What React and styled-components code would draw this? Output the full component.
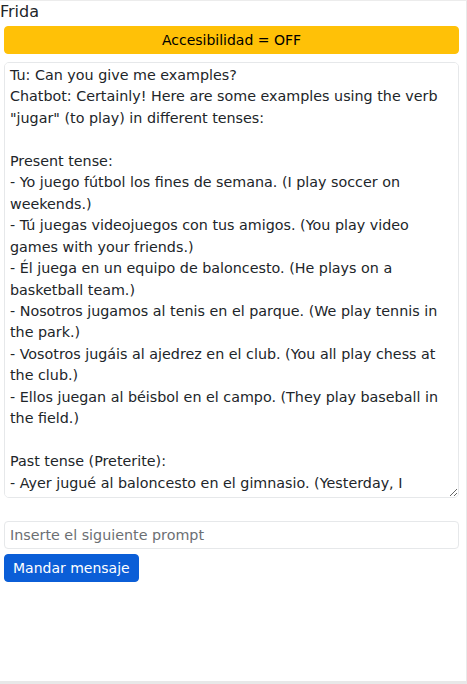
import styled, { createGlobalStyle } from "styled-components";

const GlobalStyle = createGlobalStyle`
  html, body {
    margin: 0;
    padding: 0;
    background: #ffffff;
  }
  body {
    font-family: "DejaVu Sans", "Liberation Sans", sans-serif;
    color: #212529;
  }
  * {
    box-sizing: border-box;
  }
`;

const Frame = styled.div`
  width: 467px;
  height: 684px;
  display: flex;
  flex-direction: column;
  overflow: hidden;
`;

const Viewport = styled.div`
  width: 467px;
  height: 681px;
  border-top: 1px solid #ececec;
  border-right: 1px solid #e9e9e9;
  display: flex;
  flex-direction: column;
`;

const BottomStrip = styled.div`
  height: 3px;
  background: #e8e8e8;
`;

const Title = styled.div`
  font-size: 16px;
  line-height: 21px;
  padding: 0;
  margin: 0;
`;

const Main = styled.div`
  padding: 4px 7px 0 4px;
  display: flex;
  flex-direction: column;
`;

const Button = styled.button`
  font-family: inherit;
  font-size: 14px;
  line-height: 20px;
  padding: 3px 8px;
  border: 1px solid ${(p) => (p.$variant === "warning" ? "#ffc107" : "#0b5ed7")};
  background: ${(p) => (p.$variant === "warning" ? "#ffc107" : "#0b5ed7")};
  color: ${(p) => (p.$variant === "warning" ? "#000000" : "#ffffff")};
  border-radius: 4px;
  width: ${(p) => (p.$block ? "100%" : "auto")};
  align-self: ${(p) => (p.$block ? "stretch" : "flex-start")};
  cursor: pointer;
`;

const ChatArea = styled.textarea`
  margin-top: 8px;
  width: 100%;
  height: 436px;
  font-family: inherit;
  font-size: 14.3px;
  line-height: 21.45px;
  color: #212529;
  padding: 2px 5px 4px;
  border: 1px solid #e6e8ea;
  border-radius: 5px;
  resize: vertical;
  scrollbar-width: none;
  outline: none;
`;

const PromptInput = styled.input`
  margin-top: 23px;
  width: 100%;
  height: 28px;
  font-family: inherit;
  font-size: 14.3px;
  padding: 3px 5px;
  border: 1px solid #e6e8ea;
  border-radius: 4px;
  color: #212529;
  outline: none;

  &::placeholder {
    color: #6c6f73;
  }
`;

const SendButton = styled(Button)`
  margin-top: 5px;
`;

const chatText = `Tu: Can you give me examples?
Chatbot: Certainly! Here are some examples using the verb "jugar" (to play) in different tenses:

Present tense:
- Yo juego fútbol los fines de semana. (I play soccer on weekends.)
- Tú juegas videojuegos con tus amigos. (You play video games with your friends.)
- Él juega en un equipo de baloncesto. (He plays on a basketball team.)
- Nosotros jugamos al tenis en el parque. (We play tennis in the park.)
- Vosotros jugáis al ajedrez en el club. (You all play chess at the club.)
- Ellos juegan al béisbol en el campo. (They play baseball in the field.)

Past tense (Preterite):
- Ayer jugué al baloncesto en el gimnasio. (Yesterday, I played basketball in the gym.)
- Jugaste a las cartas con tu familia. (You played cards with your family.)
- Ella jugó al voleibol en la playa. (She played volleyball at the beach.)`;

export default function App() {
  return (
    <>
      <GlobalStyle />
      <Frame>
        <Viewport>
          <Title>Frida</Title>
          <Main>
            <Button $variant="warning" $block>
              Accesibilidad = OFF
            </Button>
            <ChatArea readOnly value={chatText} />
            <PromptInput placeholder="Inserte el siguiente prompt" />
            <SendButton $variant="primary">Mandar mensaje</SendButton>
          </Main>
        </Viewport>
        <BottomStrip />
      </Frame>
    </>
  );
}
